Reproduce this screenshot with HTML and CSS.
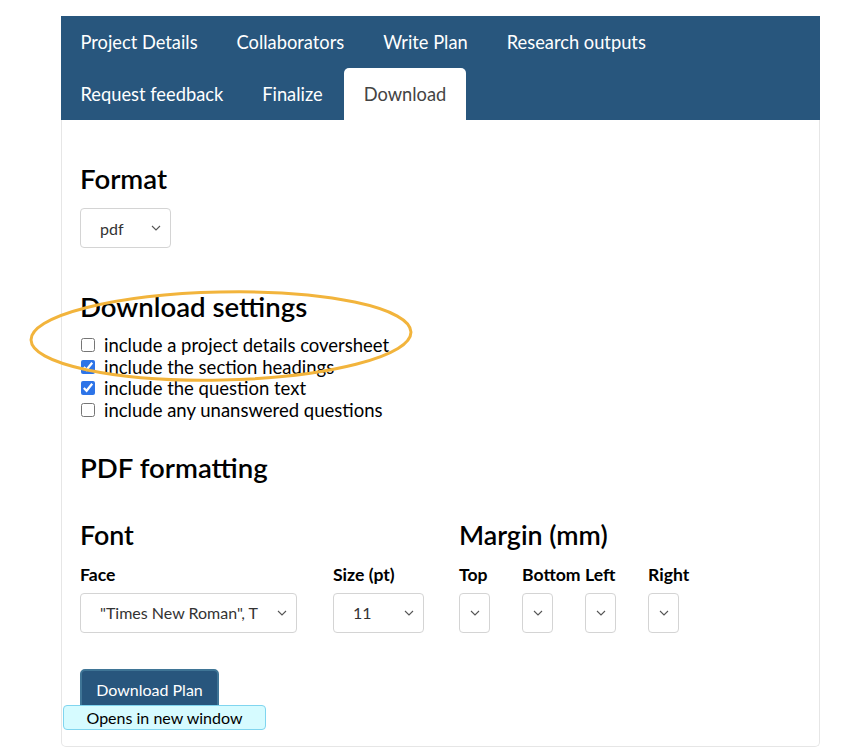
FILE: index.html
```html
<!DOCTYPE html>
<html lang="en">
<head>
<meta charset="utf-8">
<title>Download</title>
<link rel="stylesheet" href="styles.css">
</head>
<body>
<div class="page">
  <nav class="tabs">
    <ul class="tab-list">
      <li class="tab">Project Details</li>
      <li class="tab">Collaborators</li>
      <li class="tab">Write Plan</li>
      <li class="tab">Research outputs</li>
      <li class="tab">Request feedback</li>
      <li class="tab">Finalize</li>
      <li class="tab active">Download</li>
    </ul>
  </nav>
  <main class="panel">
    <h2 class="heading h-format">Format</h2>
    <div class="select sel-format">
      <select><option>pdf</option></select>
      <svg class="chev" viewBox="0 0 10 6" width="10" height="6"><path d="M1 1l4 4 4-4" fill="none" stroke="#555" stroke-width="1.1"/></svg>
    </div>

    <div class="settings">
      <h2 class="heading h-settings">Download settings</h2>
      <ul class="checks">
        <li><input type="checkbox"> include a project details coversheet</li>
        <li><input type="checkbox" checked> include the section headings</li>
        <li><input type="checkbox" checked> include the question text</li>
        <li><input type="checkbox"> include any unanswered questions</li>
      </ul>
      <svg class="ring" width="400" height="110" viewBox="0 0 400 110">
        <ellipse cx="200" cy="55" rx="190" ry="44" fill="none" stroke="#f2b43c" stroke-width="3" transform="rotate(-1.2 200 55)"/>
      </svg>
    </div>

    <h2 class="heading h-pdf">PDF formatting</h2>
    <div class="pdf-row">
      <section class="font-col">
        <h3 class="sub">Font</h3>
        <div class="fields">
          <div class="field f-face">
            <label>Face</label>
            <div class="select sel-face">
              <select><option>"Times New Roman", T</option></select>
              <svg class="chev" viewBox="0 0 10 6" width="10" height="6"><path d="M1 1l4 4 4-4" fill="none" stroke="#555" stroke-width="1.1"/></svg>
            </div>
          </div>
          <div class="field f-size">
            <label>Size (pt)</label>
            <div class="select sel-size">
              <select><option>11</option></select>
              <svg class="chev" viewBox="0 0 10 6" width="10" height="6"><path d="M1 1l4 4 4-4" fill="none" stroke="#555" stroke-width="1.1"/></svg>
            </div>
          </div>
        </div>
      </section>
      <section class="margin-col">
        <h3 class="sub">Margin (mm)</h3>
        <div class="fields">
          <div class="field f-m"><label>Top</label><div class="select sel-m"><select><option></option></select><svg class="chev" viewBox="0 0 10 6" width="10" height="6"><path d="M1 1l4 4 4-4" fill="none" stroke="#555" stroke-width="1.1"/></svg></div></div>
          <div class="field f-m"><label>Bottom</label><div class="select sel-m"><select><option></option></select><svg class="chev" viewBox="0 0 10 6" width="10" height="6"><path d="M1 1l4 4 4-4" fill="none" stroke="#555" stroke-width="1.1"/></svg></div></div>
          <div class="field f-m"><label>Left</label><div class="select sel-m"><select><option></option></select><svg class="chev" viewBox="0 0 10 6" width="10" height="6"><path d="M1 1l4 4 4-4" fill="none" stroke="#555" stroke-width="1.1"/></svg></div></div>
          <div class="field f-m"><label>Right</label><div class="select sel-m"><select><option></option></select><svg class="chev" viewBox="0 0 10 6" width="10" height="6"><path d="M1 1l4 4 4-4" fill="none" stroke="#555" stroke-width="1.1"/></svg></div></div>
        </div>
      </section>
    </div>

    <div class="actions">
      <button class="btn">Download Plan</button>
      <span class="tip">Opens in new window</span>
    </div>
  </main>
</div>
</body>
</html>
```

FILE: styles.css
```css
* { box-sizing: border-box; }
html, body { margin: 0; padding: 0; background: #fff; }
body {
  font-family: Lato, "Liberation Sans", sans-serif;
  color: #000;
}
.page {
  width: 759px;
  margin: 16px 0 0 61px;
}
.tabs {
  background: #28567d;
  height: 104px;
}
.tab-list {
  list-style: none;
  margin: 0;
  padding: 0;
  display: flex;
  flex-wrap: wrap;
}
.tab {
  height: 52px;
  line-height: 52px;
  padding: 0 19.5px;
  font-size: 18.3px;
  color: #fff;
}
.tab.active {
  background: #fff;
  color: #444;
  border-radius: 5px 5px 0 0;
  margin-left: 2px;
}
.panel {
  border: 1px solid #e6e6e6;
  border-top: none;
  border-radius: 0 0 5px 5px;
  padding: 0 18px 0 18px;
  height: 627px;
  position: relative;
}
.heading {
  font-size: 27.6px;
  font-weight: 600;
  margin: 0;
  line-height: 34px;
}
.h-format { padding-top: 42px; }
.select {
  position: relative;
  display: inline-block;
}
.select select {
  appearance: none;
  -webkit-appearance: none;
  height: 40px;
  border: 1px solid #d4d4d4;
  border-radius: 4px;
  background: #fff;
  font-family: Lato, "Liberation Sans", sans-serif;
  font-size: 16px;
  color: #333;
  padding: 0 0 0 19px;
  margin: 0;
  display: block;
}
.chev {
  position: absolute;
  top: 17px;
  right: 10px;
  pointer-events: none;
}
.sel-format { margin-top: 12px; }
.sel-format select { width: 91px; }
.settings {
  position: relative;
  margin-top: 42px;
}
.checks {
  list-style: none;
  margin: 10px 0 0;
  padding: 0;
  font-size: 18.5px;
  line-height: 22px;
}
.checks li { height: 21.7px; display: flex; align-items: center; }
.checks input {
  width: 14px;
  height: 14px;
  margin: 0 9px 0 1px;
  accent-color: #2d74e8;
}
.ring {
  position: absolute;
  left: -59px;
  top: -9px;
}
.h-pdf { margin-top: 30px; }
.pdf-row {
  display: flex;
  margin-top: 33px;
}
.font-col { width: 379px; }
.sub {
  font-size: 26.8px;
  font-weight: 600;
  margin: 0;
  line-height: 34px;
}
.fields {
  display: flex;
  margin-top: 11px;
}
.field label {
  display: block;
  font-size: 17.6px;
  font-weight: 700;
  line-height: 24px;
  margin-bottom: 6px;
  white-space: nowrap;
}
.f-face { width: 253px; }
.sel-face select { width: 217px; }
.sel-size select { width: 91px; }
.f-m { width: 63px; }
.sel-m select { width: 31px; padding: 0; }
.sel-m .chev { right: 10px; }
.actions {
  position: relative;
  margin-top: 36px;
  height: 62px;
}
.btn {
  width: 139px;
  height: 43px;
  background: #28567d;
  border: 2px solid #3f7596;
  border-radius: 5px;
  color: #fff;
  font-family: Lato, "Liberation Sans", sans-serif;
  font-size: 16px;
  padding: 0 0 2px;
  display: block;
}
.tip {
  position: absolute;
  left: -17px;
  top: 36px;
  width: 203px;
  height: 25px;
  background: #d6fbff;
  border: 1px solid #80d5ef;
  border-radius: 4px;
  font-size: 16px;
  line-height: 23px;
  text-align: center;
  color: #000;
}
```
